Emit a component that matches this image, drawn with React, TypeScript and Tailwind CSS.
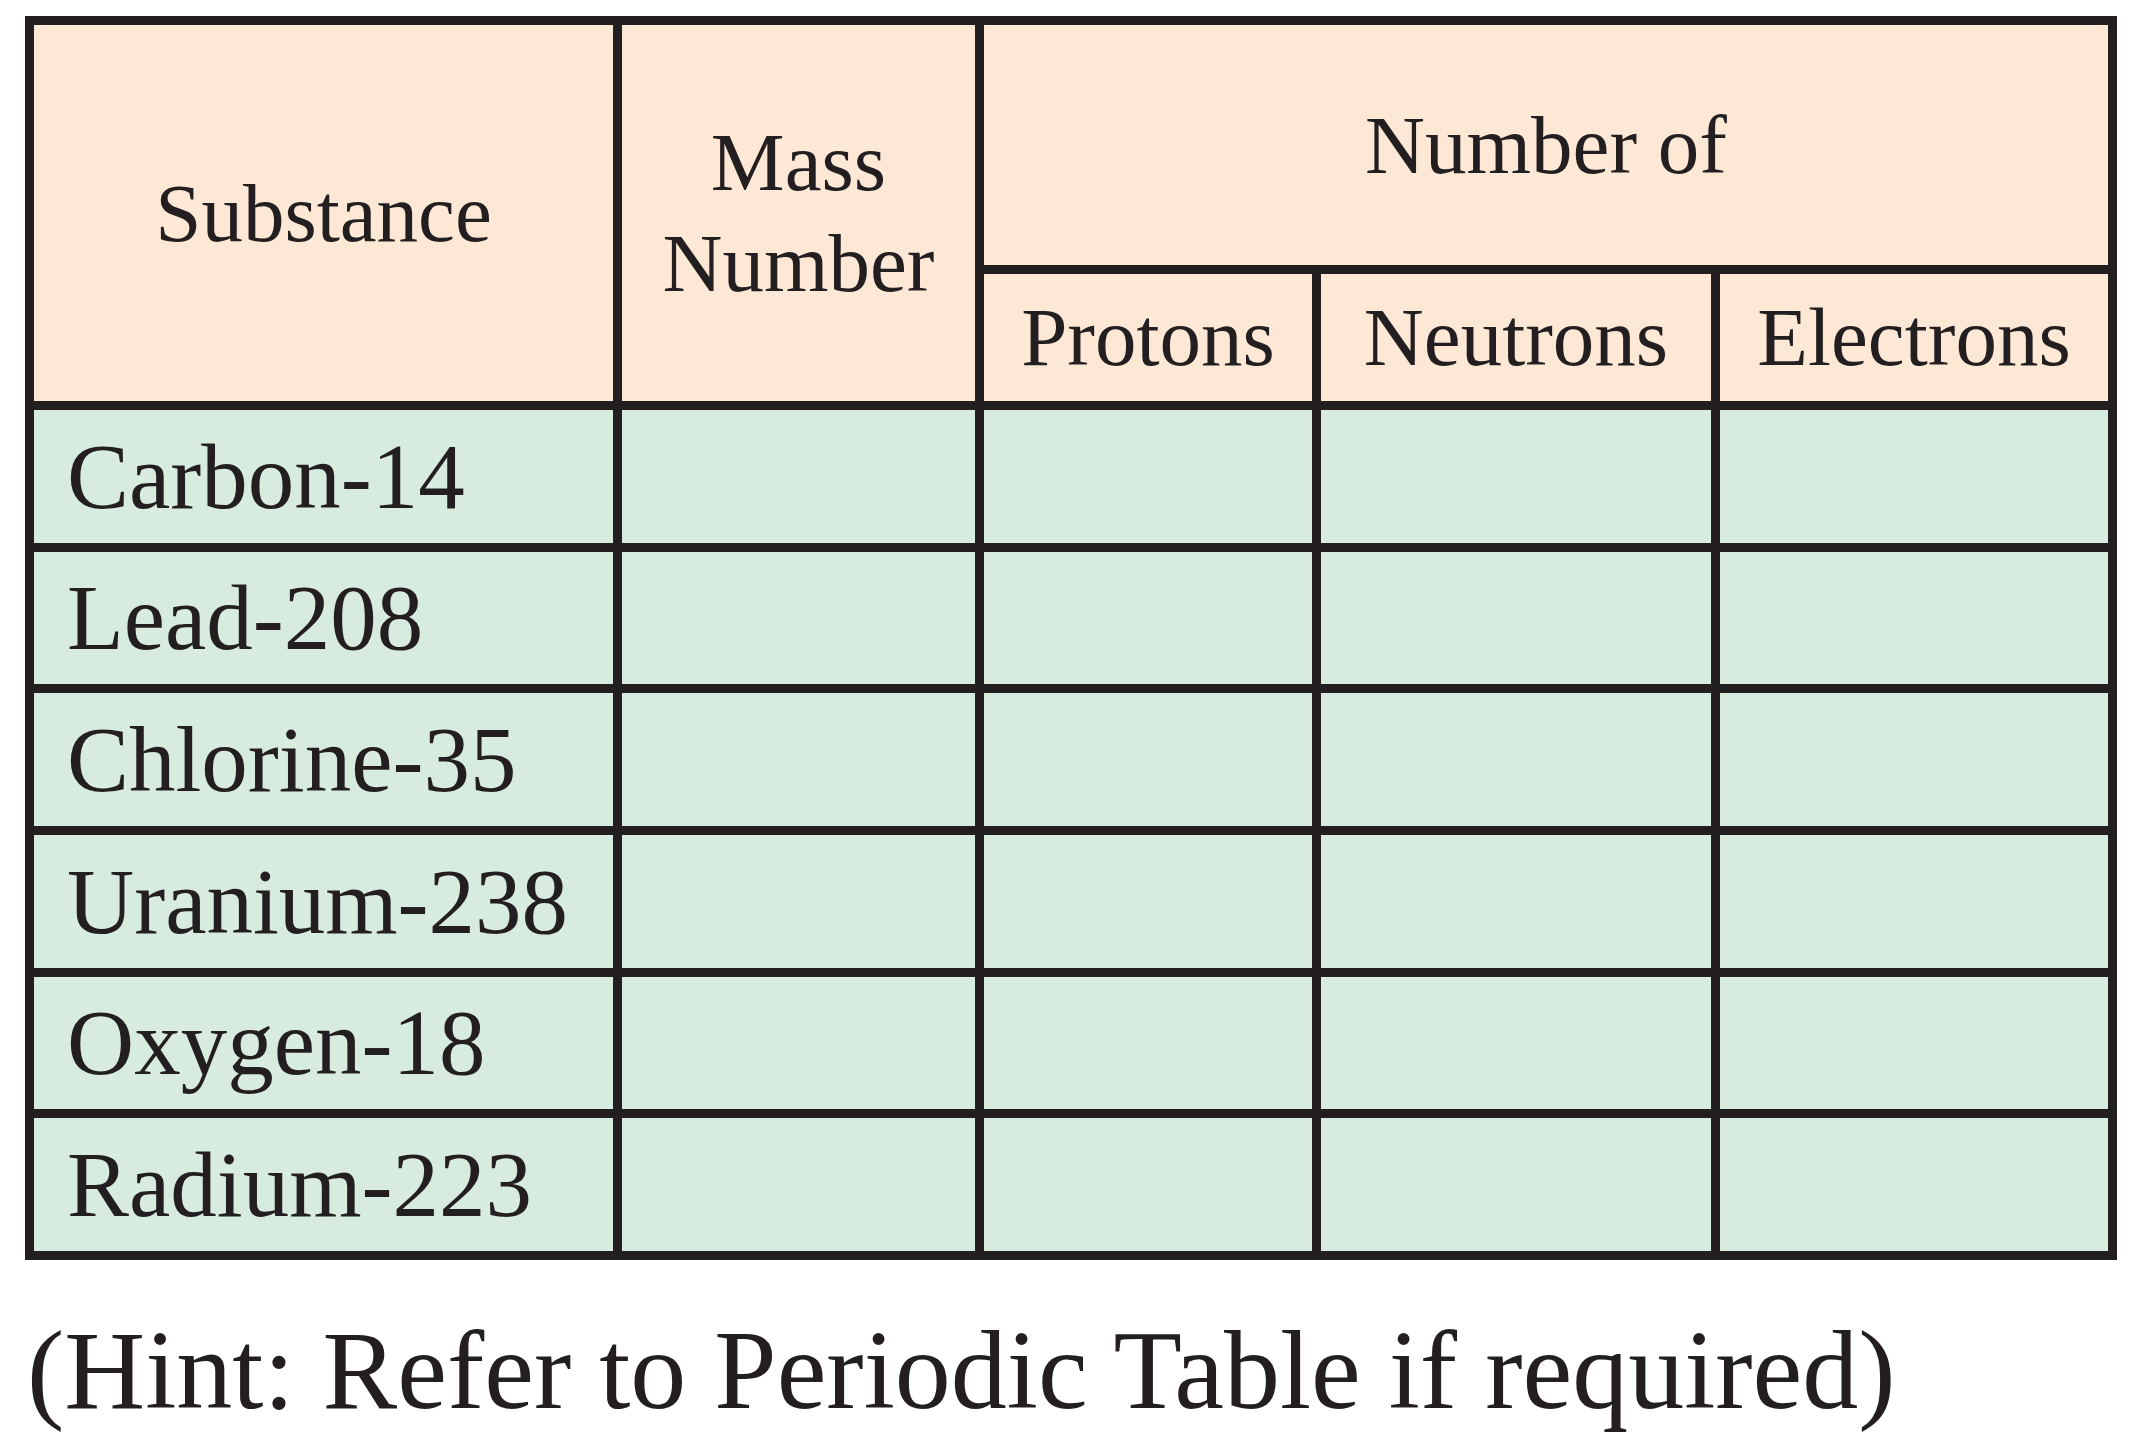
import React from "react";

const rows = [
  "Carbon-14",
  "Lead-208",
  "Chlorine-35",
  "Uranium-238",
  "Oxygen-18",
  "Radium-223",
];

export default function App() {
  const head =
    "bg-[#fde8d6] flex items-center justify-center text-center text-[83px] text-[#231f20]";
  const body = "bg-[#d8ebdf]";
  return (
    <div
      className="min-h-screen bg-white pl-[25px] pt-[16px] text-[#231f20]"
      style={{ fontFamily: '"Liberation Serif", "Times New Roman", serif' }}
    >
      <div className="grid w-[2092px] grid-cols-[579px_353px_328px_390px_388px] grid-rows-[240px_127px_repeat(6,132.67px)] gap-[9px] bg-[#231f20] p-[9px]">
        <div className={`${head} row-span-2 leading-none`}>Substance</div>
        <div className={`${head} row-span-2 leading-[101px]`}>
          Mass
          <br />
          Number
        </div>
        <div className={`${head} col-span-3 leading-none`}>Number of</div>
        <div className={`${head} leading-none`}>Protons</div>
        <div className={`${head} leading-none`}>Neutrons</div>
        <div className={`${head} leading-none`}>Electrons</div>
        {rows.map((r) => (
          <React.Fragment key={r}>
            <div className={`${body} flex items-center pl-[33px] text-[93px] leading-none`}>
              {r}
            </div>
            <div className={body} />
            <div className={body} />
            <div className={body} />
            <div className={body} />
          </React.Fragment>
        ))}
      </div>
      <div className="ml-[2px] mt-[54px] text-[112px] leading-none">
        (Hint: Refer to Periodic Table if required)
      </div>
    </div>
  );
}
